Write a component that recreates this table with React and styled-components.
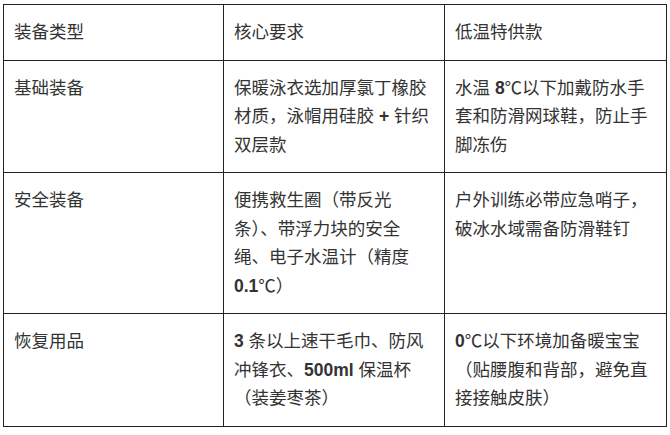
import React from "react";
import styled, { createGlobalStyle } from "styled-components";

const Global = createGlobalStyle`
  html, body { margin: 0; padding: 0; background: #fff; }
  body { font-family: "Liberation Sans", "Noto Sans CJK SC", sans-serif; }
`;

const Page = styled.div`
  padding: 4px 0 0 3px;
`;

const Table = styled.table`
  border-collapse: collapse;
  table-layout: fixed;
  width: 663px;
  color: #333;
  font-size: 17.5px;
  line-height: 28.5px;
`;

const Cell = styled.td`
  border: 1px solid #222;
  padding: 13px 10px 13px 10px;
  vertical-align: top;
  word-break: normal;
`;

const HeadCell = styled(Cell).attrs({ as: "th" })`
  font-weight: normal;
  text-align: left;
`;

const Num = styled.span`
  font-weight: bold;
  white-space: nowrap;
`;

const rows = [
  [
    "基础装备",
    <>保暖泳衣选加厚氯丁橡胶材质，泳帽用硅胶 <Num>+</Num> 针织双层款</>,
    <>水温 <Num>8</Num>℃以下加戴防水手套和防滑网球鞋，防止手脚冻伤</>,
  ],
  [
    "安全装备",
    <>便携救生圈（带反光条）、带浮力块的安全绳、电子水温计（精度 <Num>0.1</Num>℃）</>,
    <>户外训练必带应急哨子，破冰水域需备防滑鞋钉</>,
  ],
  [
    "恢复用品",
    <><Num>3</Num> 条以上速干毛巾、防风冲锋衣、<Num>500ml</Num> 保温杯（装姜枣茶）</>,
    <><Num>0</Num>℃以下环境加备暖宝宝（贴腰腹和背部，避免直接接触皮肤）</>,
  ],
];

export default function App() {
  return (
    <Page>
      <Global />
      <Table>
        <colgroup>
          <col style={{ width: 220 }} />
          <col style={{ width: 221 }} />
          <col style={{ width: 222 }} />
        </colgroup>
        <thead>
          <tr>
            <HeadCell>装备类型</HeadCell>
            <HeadCell>核心要求</HeadCell>
            <HeadCell>低温特供款</HeadCell>
          </tr>
        </thead>
        <tbody>
          {rows.map((r, i) => (
            <tr key={i}>
              {r.map((c, j) => (
                <Cell key={j}>{c}</Cell>
              ))}
            </tr>
          ))}
        </tbody>
      </Table>
    </Page>
  );
}
